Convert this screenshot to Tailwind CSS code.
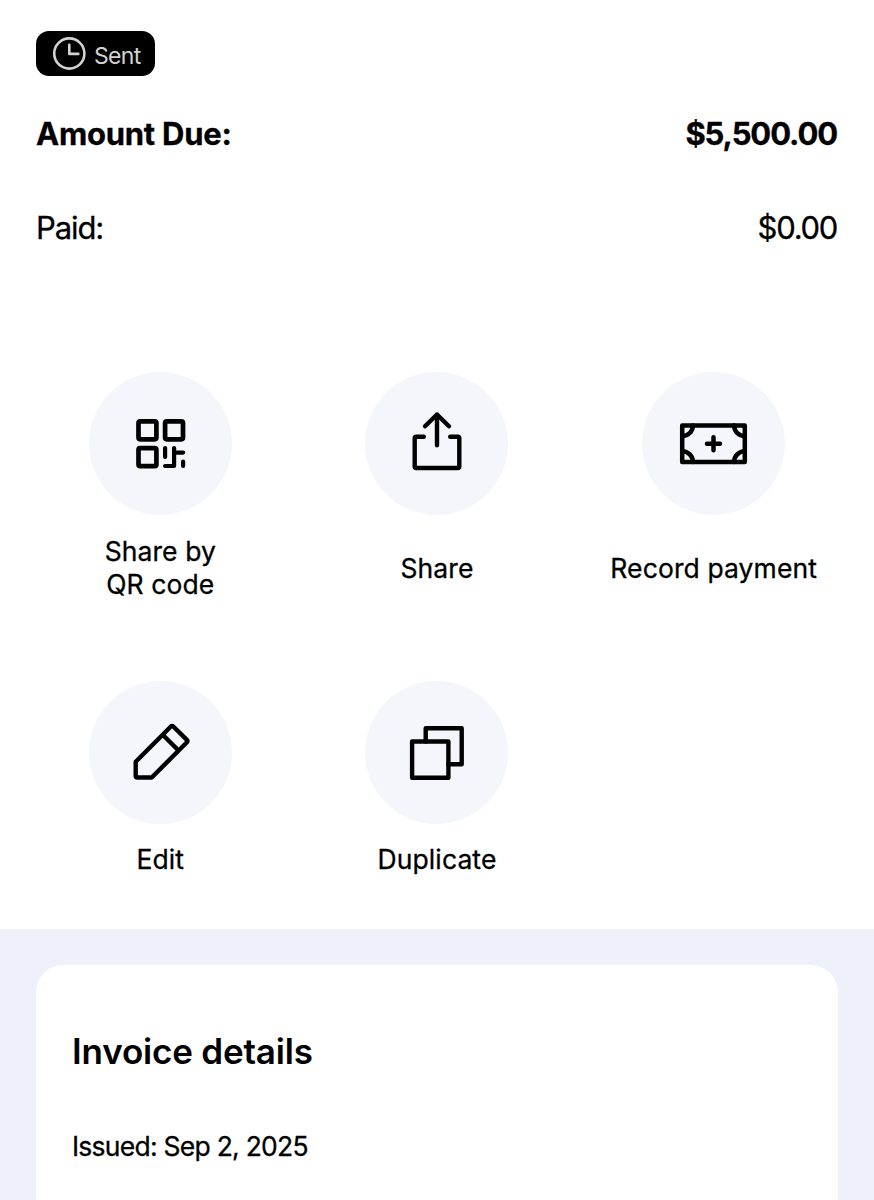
<!DOCTYPE html>
<html lang="en">
<head>
    <meta charset="UTF-8">
    <meta name="viewport" content="width=device-width, initial-scale=1.0">
    <title>Invoice</title>
    <script src="https://cdn.jsdelivr.net/npm/@tailwindcss/browser@4"></script>
</head>
<body class="bg-white text-black font-['Inter','Liberation_Sans',sans-serif] h-[1200px] overflow-hidden flex flex-col">
    <!-- Summary -->
    <header class="h-[372px] shrink-0 px-9 pt-[31px]">
        <div class="inline-flex items-center w-[119px] h-[45px] pl-4 gap-[7px] rounded-[13px] bg-black text-[#d2d2d2] align-top">
            <svg class="size-[35px] shrink-0" viewBox="0 0 35 35" fill="none" stroke="currentColor" stroke-width="2.6" stroke-linecap="round" stroke-linejoin="round">
                <circle cx="17.3" cy="17.5" r="15.1"/>
                <path d="M17.3 8.7V17.9H26.3"/>
            </svg>
            <span class="text-[23px] leading-7 tracking-[-0.7px] pt-1">Sent</span>
        </div>
        <div class="flex justify-between mt-[38px] text-[31px] leading-10 font-bold">
            <span class="tracking-[-0.25px] [-webkit-text-stroke:0.3px]">Amount Due:</span>
            <span class="tracking-[-1.1px] pr-px [-webkit-text-stroke:0.3px]">$5,500.00</span>
        </div>
        <div class="flex justify-between mt-[54px] text-[31px] leading-10 [-webkit-text-stroke:0.3px]">
            <span class="tracking-[-1.1px]">Paid:</span>
            <span class="tracking-[-1.3px] pr-px">$0.00</span>
        </div>
    </header>

    <!-- Actions -->
    <main class="h-[557px] shrink-0 px-[22px] grid grid-cols-3 grid-rows-[309px_1fr] text-[26.5px] leading-[33px] tracking-[0.1px] text-center">
        <div class="flex flex-col items-center">
            <div class="size-[143px] rounded-full bg-[#f5f6fb] flex items-center justify-center">
                <svg class="size-20" viewBox="-0.3 4 80 80" fill="none" stroke="currentColor" stroke-width="4.7" stroke-linecap="round" stroke-linejoin="round">
                    <rect x="18.2" y="21.4" width="17.9" height="17.9" rx="1.7"/>
                    <rect x="44.8" y="21.4" width="17.9" height="17.9" rx="1.7"/>
                    <rect x="18.2" y="48.2" width="17.9" height="17.9" rx="1.7"/>
                    <path stroke-width="4.2" d="M44.8 48V57M53.8 48V66H44.8M53.8 52.6H62.8M62.8 61.6V66"/>
                </svg>
            </div>
            <div class="h-[66px] mt-5 flex items-center [-webkit-text-stroke:0.3px]">Share by<br>QR code</div>
        </div>
        <div class="flex flex-col items-center">
            <div class="size-[143px] rounded-full bg-[#f5f6fb] flex items-center justify-center">
                <svg class="size-20" viewBox="0 4 80 80" fill="none" stroke="currentColor" stroke-width="4.4" stroke-linecap="round" stroke-linejoin="round">
                    <path d="M40 45.3V14.5M28 26.3L40 14.5L52 26.3"/>
                    <path d="M26.8 36.8H19.2Q17.7 36.8 17.7 38.3V66.5Q17.7 68 19.2 68H60.8Q62.3 68 62.3 66.5V38.3Q62.3 36.8 60.8 36.8H53.2"/>
                </svg>
            </div>
            <div class="h-[66px] mt-5 flex items-center [-webkit-text-stroke:0.3px]">Share</div>
        </div>
        <div class="flex flex-col items-center">
            <div class="size-[143px] rounded-full bg-[#f5f6fb] flex items-center justify-center">
                <svg class="size-20" viewBox="0.5 0 80 80" fill="none" stroke="currentColor" stroke-width="4.5" stroke-linecap="round" stroke-linejoin="round">
                    <rect x="8.7" y="21.4" width="62.6" height="36.6"/>
                    <path d="M19.4 21.4A10.7 10.7 0 0 1 8.7 32.1M60.6 21.4A10.7 10.7 0 0 0 71.3 32.1M8.7 47.3A10.7 10.7 0 0 1 19.4 58M71.3 47.3A10.7 10.7 0 0 0 60.6 58"/>
                    <path d="M33.5 39.7H46.5M40 33.2V46.2"/>
                </svg>
            </div>
            <div class="h-[66px] mt-5 flex items-center [-webkit-text-stroke:0.3px]">Record payment</div>
        </div>
        <div class="flex flex-col items-center">
            <div class="size-[143px] rounded-full bg-[#f5f6fb] flex items-center justify-center">
                <svg class="size-20" viewBox="0.3 0.8 80 80" fill="none" stroke="currentColor" stroke-width="4.4" stroke-linecap="round" stroke-linejoin="round">
                    <path d="M16 49.5L51.2 14.3Q52.4 13.1 53.6 14.3L67.2 27.7Q68.4 28.9 67.2 30.1L32 65.3H17.5Q16 65.3 16 63.8ZM43 22.5L58.6 38.1"/>
                </svg>
            </div>
            <div class="mt-[19px] [-webkit-text-stroke:0.3px]">Edit</div>
        </div>
        <div class="flex flex-col items-center">
            <div class="size-[143px] rounded-full bg-[#f5f6fb] flex items-center justify-center">
                <svg class="size-20" viewBox="0 0.7 80 80" fill="none" stroke="currentColor" stroke-width="4.4" stroke-linecap="round" stroke-linejoin="round">
                    <rect x="15.1" y="29.2" width="36.3" height="36.3"/>
                    <path d="M28.7 29.2V16H64.7V52H51.4"/>
                </svg>
            </div>
            <div class="mt-[19px] [-webkit-text-stroke:0.3px]">Duplicate</div>
        </div>
    </main>

    <!-- Details -->
    <section class="flex-1 bg-[#eef0fa] px-9 pt-9">
        <div class="h-full bg-white rounded-t-[27px] px-9 pt-[63px]">
            <h2 class="text-[35px] leading-[46px] font-semibold tracking-[-0.18px]">Invoice details</h2>
            <p class="mt-[55px] text-[26.5px] leading-[34px] tracking-[-0.75px] [-webkit-text-stroke:0.3px]">Issued: Sep 2, 2025</p>
        </div>
    </section>
</body>
</html>
